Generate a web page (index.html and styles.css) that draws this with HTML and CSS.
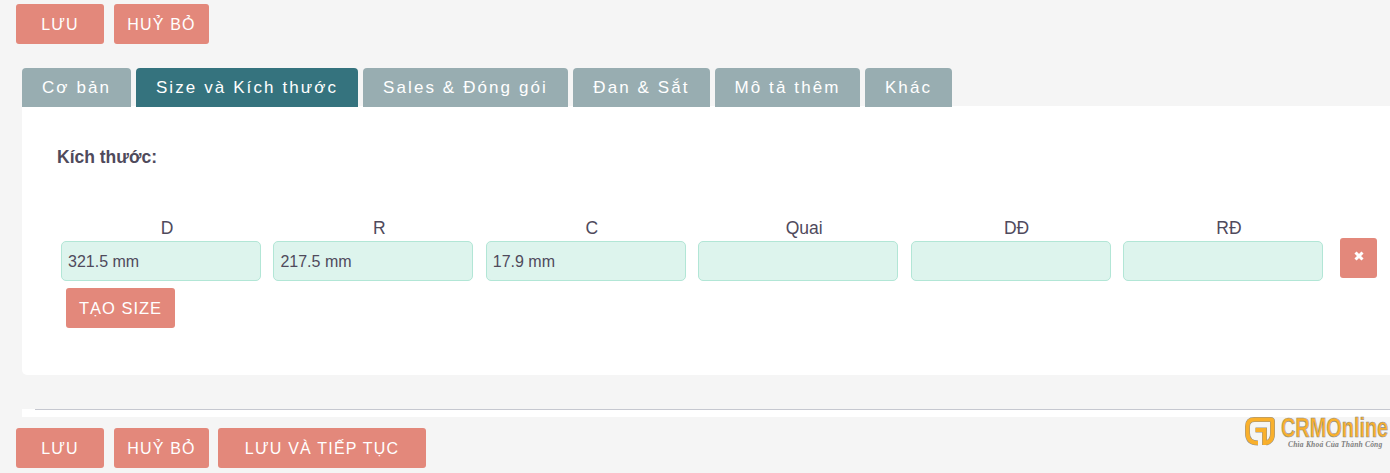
FILE: index.html
```html
<!DOCTYPE html>
<html lang="vi">
<head>
  <meta charset="UTF-8">
  <meta name="viewport" content="width=device-width, initial-scale=1">
  <title>Size và Kích thước</title>
  <link rel="stylesheet" href="styles.css">
</head>
<body>
  <div class="actions actions-top">
    <button class="btn btn-save">LƯU</button>
    <button class="btn btn-cancel">HUỶ BỎ</button>
  </div>

  <div class="tabs">
    <a class="tab tab-basic">Cơ bản</a>
    <a class="tab tab-size active">Size và Kích thước</a>
    <a class="tab tab-sales">Sales &amp; Đóng gói</a>
    <a class="tab tab-weave">Đan &amp; Sắt</a>
    <a class="tab tab-desc">Mô tả thêm</a>
    <a class="tab tab-other">Khác</a>
  </div>

  <div class="panel">
    <h4 class="panel-title">Kích thước:</h4>
    <div class="size-row">
      <div class="size-fields">
        <div class="size-field">
          <label>D</label>
          <input type="text" value="321.5 mm">
        </div>
        <div class="size-field">
          <label>R</label>
          <input type="text" value="217.5 mm">
        </div>
        <div class="size-field">
          <label>C</label>
          <input type="text" value="17.9 mm">
        </div>
        <div class="size-field">
          <label>Quai</label>
          <input type="text">
        </div>
        <div class="size-field">
          <label>DĐ</label>
          <input type="text">
        </div>
        <div class="size-field">
          <label>RĐ</label>
          <input type="text">
        </div>
      </div>
      <button class="btn btn-remove" aria-label="Xoá">
        <svg width="10" height="10" viewBox="0 0 10 10">
          <path d="M1.500 1.500l7 7M8.500 1.500l-7 7" stroke="#fff" stroke-width="3" fill="none"/>
        </svg>
      </button>
    </div>
    <button class="btn btn-create">TẠO SIZE</button>
  </div>

  <div class="divider-strip"><hr></div>

  <div class="actions actions-bottom">
    <button class="btn btn-save">LƯU</button>
    <button class="btn btn-cancel">HUỶ BỎ</button>
    <button class="btn btn-continue">LƯU VÀ TIẾP TỤC</button>
  </div>

  <div class="logo">
    <svg class="logo-icon" width="31" height="30" viewBox="0 0 31 30" fill="none">
      <g stroke="#8f8f8f" stroke-width="5">
        <path d="M13 26C6 26 2.500 22.500 2.500 16V9.500C2.500 5 5 2.500 9.500 2.500H25.500Q27.500 2.500 27.500 4.500V17C27.500 22 24.500 25 21 26"/>
        <path d="M10.500 13H19.500V28"/>
      </g>
      <g stroke="#f9b02c" stroke-width="4">
        <path d="M13 26C6 26 2.500 22.500 2.500 16V9.500C2.500 5 5 2.500 9.500 2.500H25.500Q27.500 2.500 27.500 4.500V17C27.500 22 24.500 25 21 26"/>
        <path d="M10.500 13H19.500V28"/>
      </g>
    </svg>
    <div class="logo-text">
      <div class="logo-name">CRMOnline</div>
      <div class="logo-slogan">Chìa Khoá Của Thành Công</div>
    </div>
  </div>
</body>
</html>
```
FILE: styles.css
```css
html, body {
  height: 473px;
  overflow: hidden;
}

body {
  position: relative;
  margin: 0;
  background-color: #f5f5f5;
  color: #4f4a5c;
  font-family: "Liberation Sans", Arial, sans-serif;
  font-size: 16px;
}

.btn {
  height: 40px;
  padding: 1px 0 0;
  border: none;
  border-radius: 3px;
  background-color: #e3887b;
  color: #fff;
  font-family: inherit;
  font-size: 16px;
  letter-spacing: 1.2px;
}

.actions {
  display: flex;
  padding-left: 16px;
}

.actions-top {
  padding-top: 4px;
}

.actions-bottom {
  margin-top: 11px;
}

.btn-save {
  width: 88px;
  margin-right: 10px;
}

.btn-cancel {
  width: 95px;
  margin-right: 9px;
}

.btn-continue {
  width: 208px;
}

.tabs {
  position: relative;
  display: flex;
  gap: 5px;
  margin: 24px 0 -1px 22px;
}

.tab {
  height: 39px;
  border-radius: 4px 4px 0 0;
  background-color: #98adb1;
  color: #fff;
  font-size: 17px;
  line-height: 39px;
  letter-spacing: 2.1px;
  text-align: center;
}

.tab.active {
  background-color: #35737e;
}

.tab-basic { width: 109px; }
.tab-size { width: 222px; }
.tab-sales { width: 205px; }
.tab-weave { width: 137px; }
.tab-desc { width: 145px; }
.tab-other { width: 87px; }

.panel {
  height: 269px;
  margin-left: 22px;
  border-radius: 0 0 0 5px;
  background-color: #fff;
}

.panel-title {
  margin: 0;
  padding: 42px 0 0 35px;
  font-size: 17.5px;
  line-height: 18px;
  font-weight: bold;
}

.size-row {
  display: flex;
  align-items: flex-end;
  margin: 52px 0 0 39px;
}

.size-fields {
  display: grid;
  grid-template-columns: repeat(6, 200px);
  column-gap: 12.4px;
}

.size-field label {
  display: block;
  height: 23px;
  padding-left: 12px;
  font-size: 17.5px;
  line-height: 21px;
  text-align: center;
}

.size-field input {
  display: block;
  box-sizing: border-box;
  width: 200px;
  height: 40px;
  padding: 2px 6px 0;
  border: 1px solid #b2e6d6;
  border-radius: 5px;
  background-color: #ddf4ed;
  color: #4f4a5c;
  font-family: inherit;
  font-size: 16px;
}

.btn-remove {
  display: flex;
  align-items: center;
  justify-content: center;
  width: 37px;
  margin: 0 0 3px 17px;
  padding: 0 0 5px 1px;
}

.btn-create {
  display: block;
  width: 109px;
  margin: 7px 0 0 44px;
  font-size: 16.5px;
  letter-spacing: 1px;
}

.divider-strip {
  height: 8px;
  margin: 34px 0 0 22px;
  background-color: #fff;
}

.divider-strip hr {
  margin: 0 0 0 13px;
  border: none;
  border-top: 1px solid #c6c8d0;
}

/* logo sits over the corner of the page */
.logo {
  position: absolute;
  left: 1245px;
  top: 417px;
  display: flex;
  width: 145px;
}

.logo-icon {
  flex: none;
}

.logo-text {
  margin-left: 5px;
}

.logo-name {
  width: 109px;
  color: #f9b02c;
  font-size: 28px;
  line-height: 22px;
  font-weight: bold;
  white-space: nowrap;
  transform: scaleX(.71);
  transform-origin: left;
  -webkit-text-stroke: .6px #8d8d8d;
}

.logo-slogan {
  margin: 2px 0 0 7px;
  color: #7d7d7d;
  font-family: "Liberation Serif", serif;
  font-size: 7.5px;
  line-height: 8px;
  font-style: italic;
  font-weight: bold;
  letter-spacing: .2px;
  white-space: nowrap;
}
```
